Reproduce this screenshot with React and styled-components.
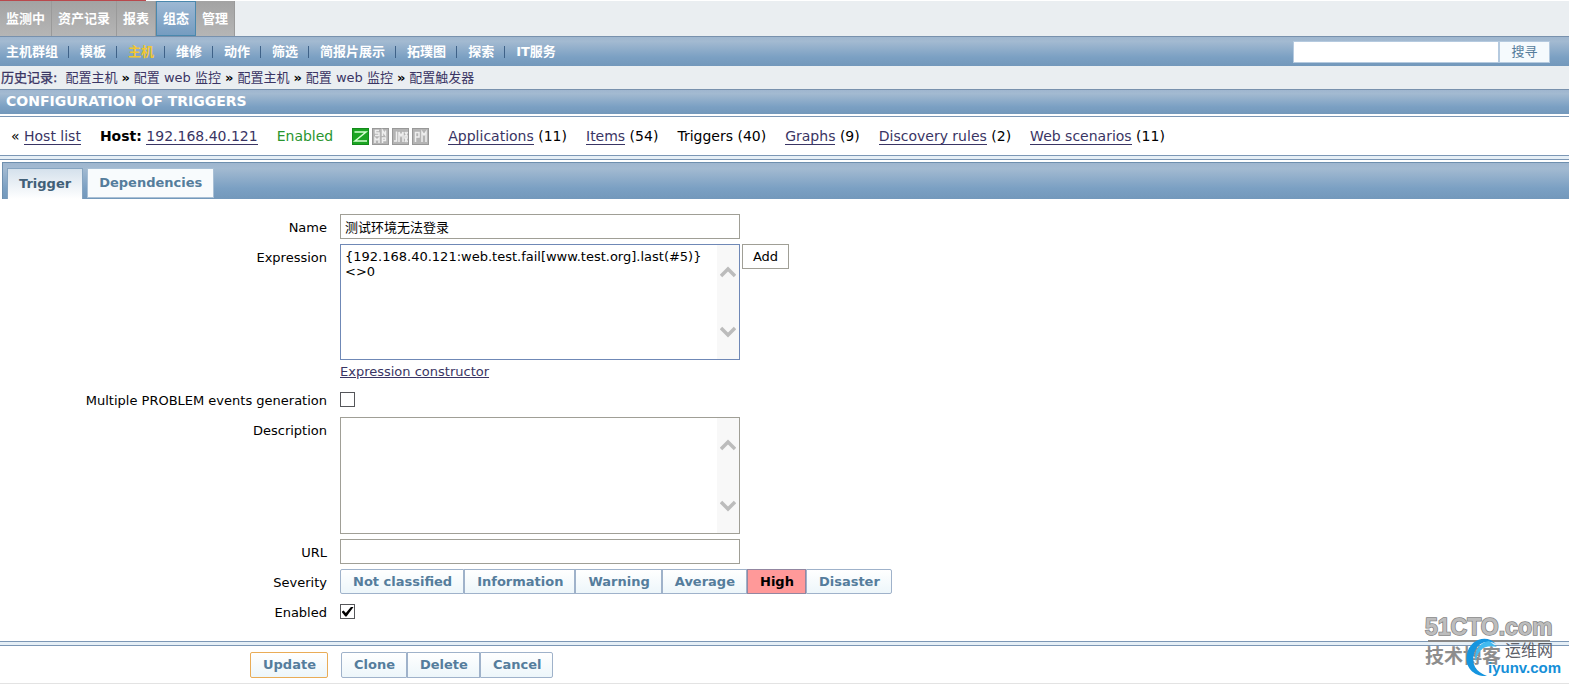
import React from 'react';
import styled, { createGlobalStyle, css } from 'styled-components';

const bar = 'linear-gradient(to bottom, #9fb6cf 0%, #a3bad1 15%, #7ba0c3 70%, #7398bb 100%)';
const link = '#3a3564';
const steel = '#557d9c';

const GlobalStyle = createGlobalStyle`
  * { box-sizing: border-box; }
  body {
    margin: 0;
    background: #fff;
    color: #000;
    font: 13px/16px "DejaVu Sans", "Noto Sans CJK SC", sans-serif;
  }
  button, input, textarea { font: inherit; }
`;

const Page = styled.div`
  position: relative;
  overflow: hidden;
`;

const Progress = styled.div`
  height: 1px;
  width: 146px;
  background: #b9484c;
`;

const MainMenu = styled.nav`
  display: flex;
  height: 35px;
  background: #eaeef1;
`;

const MainItem = styled.a`
  display: flex;
  align-items: center;
  padding: 0 6px;
  border-right: 1px solid #9a9a9a;
  background: linear-gradient(to bottom, #a3a3a3, #b5b5b5);
  color: #fff;
  font-weight: bold;
  text-decoration: none;
  ${(props) => props.$active && css`
    border: 1px solid #4a88ad;
    background: linear-gradient(to bottom, #9db8d3, #759cc0);
  `}
`;

const SubMenu = styled.div`
  display: flex;
  align-items: center;
  justify-content: space-between;
  height: 30px;
  padding: 0 19px 0 6px;
  border-top: 1px solid #7891ad;
  background: ${bar};
`;

const SubNav = styled.nav`
  display: flex;
  align-items: center;
`;

const SubItem = styled.a`
  display: flex;
  align-items: center;
  color: ${(props) => (props.$active ? '#f1c631' : '#fff')};
  font-weight: bold;
  text-decoration: none;
  &:not(:last-child)::after {
    content: '';
    width: 1px;
    height: 12px;
    margin: 0 11px 0 10px;
    background: #3f6288;
  }
`;

const Search = styled.form`
  display: flex;
  height: 22px;
  margin: 0;
`;

const SearchInput = styled.input`
  width: 206px;
  border: 1px solid #b5cadf;
  background: #fff;
`;

const SearchButton = styled.button`
  width: 51px;
  padding: 0;
  border: 1px solid #b5cadf;
  background: #f5fafd;
  color: ${steel};
`;

const History = styled.nav`
  display: flex;
  align-items: center;
  gap: 4px;
  height: 23px;
  padding-left: 1px;
  background: #eaeef1;
  color: #000;
  a {
    color: ${link};
    text-decoration: none;
  }
`;

const HistoryLabel = styled.span`
  margin-right: 4px;
  color: ${link};
  -webkit-text-stroke: 0.3px;
`;

const Title = styled.h1`
  height: 25px;
  margin: 0;
  padding-left: 6px;
  border-top: 1px solid #7891ad;
  background: ${bar};
  color: #fff;
  font-size: 14px;
  line-height: 23px;
`;

const Rule = styled.div`
  height: 5px;
  border: solid #7c97b5;
  border-width: 1px 0;
  background: #e6eff6;
`;

const HostBar = styled.div`
  display: flex;
  align-items: center;
  gap: 19px;
  height: 39px;
  margin-top: 2px;
  padding-left: 11px;
  border-top: 1px solid #7c97b5;
  font-size: 14px;
  white-space: nowrap;
  a {
    color: ${link};
    text-decoration: none;
    border-bottom: 1px solid ${link};
  }
`;

const Status = styled.span`
  color: #29952f;
`;

const Agents = styled.span`
  display: flex;
  gap: 3px;
`;

const Tabs = styled.div`
  display: flex;
  align-items: flex-end;
  gap: 4px;
  height: 37px;
  margin: 2px 0 0 2px;
  padding-left: 4px;
  border: solid #6e8fae;
  border-width: 1px 0 0 1px;
  background: ${bar};
`;

const Tab = styled.button`
  height: 30px;
  margin-bottom: 1px;
  padding: 0 11px;
  border: 1px solid #a9c0d6;
  background: #f8fbfd;
  color: ${steel};
  font-weight: bold;
  ${(props) => props.$active && css`
    height: 31px;
    margin-bottom: 0;
    border-bottom: 0;
    border-color: #86a4c0;
    background: linear-gradient(to bottom, #d5e1ec, #fff);
    color: #416078;
  `}
`;

const Form = styled.form`
  display: grid;
  gap: 5px;
  margin: 0;
  padding: 15px 0 17px;
`;

const Row = styled.div`
  display: grid;
  grid-template-columns: 327px 1fr;
  column-gap: 13px;
  min-height: 25px;
`;

const Label = styled.label`
  padding-top: 6px;
  text-align: right;
`;

const Field = styled.div`
  display: flex;
  align-items: flex-start;
  gap: 2px;
`;

const Column = styled.div`
  display: flex;
  flex-direction: column;
  align-items: flex-start;
  gap: 4px;
  padding-bottom: 2px;
`;

const Input = styled.input`
  width: 400px;
  height: 25px;
  padding: 0 4px;
  border: 1px solid #a09f96;
  background: #fff;
`;

const AreaBox = styled.div`
  display: flex;
  width: 400px;
  height: ${(props) => (props.$focused ? 116 : 117)}px;
  border: 1px solid ${(props) => (props.$focused ? '#6f88b6' : '#a09f96')};
`;

const Area = styled.textarea`
  flex: 1;
  min-width: 0;
  padding: 4px;
  border: 0;
  outline: 0;
  resize: none;
  overflow: hidden;
  line-height: 15px;
`;

const Scroll = styled.div`
  display: flex;
  flex-direction: column;
  align-items: center;
  justify-content: space-between;
  width: 22px;
  padding: 21px 0;
  background: #f8f8f8;
`;

const AddButton = styled.button`
  width: 47px;
  height: 25px;
  padding: 0;
  border: 1px solid #a09f96;
  background: #fff;
`;

const ConstructorLink = styled.a`
  color: ${link};
`;

const Check = styled.input`
  appearance: none;
  width: 15px;
  height: 15px;
  margin: 5px 0 0;
  border: 1px solid #55565a;
  background: #fff;
  display: grid;
  place-items: center;
  &:checked::before {
    content: '';
    width: 12px;
    height: 10px;
    background: #000;
    clip-path: polygon(0 52%, 18% 40%, 36% 66%, 82% 0, 100% 6%, 42% 100%, 32% 100%);
  }
`;

const buttonLook = css`
  padding: 0 11px 0 12px;
  border: 1px solid #9fb2ca;
  background: linear-gradient(to bottom, #fff, #edf6fa);
  color: ${steel};
  font-weight: bold;
`;

const Group = styled.div`
  display: flex;
  > :first-child { border-radius: 2px 0 0 2px; }
  > :last-child { border-radius: 0 2px 2px 0; }
`;

const Severity = styled.label`
  ${buttonLook}
  height: 25px;
  line-height: 23px;
  &:has(input:checked) {
    background: #ff9999;
    border-color: #9386a0;
    color: #000;
  }
  input {
    appearance: none;
    width: 0;
    margin: 0;
    display: block;
  }
`;

const Footer = styled.div`
  display: flex;
  gap: 13px;
  height: 38px;
  padding: 6px 0 0 250px;
  border-bottom: 1px solid #e3e3e3;
`;

const Button = styled.button`
  ${buttonLook}
  height: 26px;
  ${(props) => props.$primary && css`
    border-color: #e9ac57;
    border-radius: 2px;
  `}
`;

const Watermark = styled.svg`
  position: absolute;
  right: 0;
  bottom: 0;
  pointer-events: none;
`;

const mainItems = ['监测中', '资产记录', '报表', '组态', '管理'];
const subItems = ['主机群组', '模板', '主机', '维修', '动作', '筛选', '简报片展示', '拓璞图', '探索', 'IT服务'];
const history = ['配置主机', '配置 web 监控', '配置主机', '配置 web 监控', '配置触发器'];
const severities = ['Not classified', 'Information', 'Warning', 'Average', 'High', 'Disaster'];
const hostLinks = [
  ['Applications', 11],
  ['Items', 54],
  ['Triggers', 40],
  ['Graphs', 9],
  ['Discovery rules', 2],
  ['Web scenarios', 11],
];

// strokes of the small agent badges on a 17x17 grid
const agents = [
  { on: true, d: 'M2.500 4H14L3 13H15' },
  { d: 'M7 2.500H3.500V5H7V7.500H3M10.500 8V2.500L13.500 7V2.500M3 15V10L5 12L7 10V15M10.500 15V10H13.500V12.500H10.500' },
  { d: 'M2 13H4.500V3.500M7 14V4L9 8L11 4V14M13 4L15 8V10L13 14M15.500 4L13 8V10L15.500 14' },
  { d: 'M3.500 14V4.500H7V9H4M10 14V4L12 7L14 4V14' },
];

function ScrollArrows() {
  return (
    <Scroll aria-hidden="true">
      <svg width="16" height="12" fill="none" stroke="#bcbcbc" strokeWidth="3.500">
        <path d="M1 10l7-7 7 7" />
      </svg>
      <svg width="16" height="12" fill="none" stroke="#bcbcbc" strokeWidth="3.500">
        <path d="M1 2l7 7 7-7" />
      </svg>
    </Scroll>
  );
}

export default function App() {
  return (
    <Page>
      <GlobalStyle />
      <Progress />
      <MainMenu>
        {mainItems.map((item) => (
          <MainItem key={item} href="#" $active={item === '组态'}>{item}</MainItem>
        ))}
      </MainMenu>
      <SubMenu>
        <SubNav>
          {subItems.map((item) => (
            <SubItem key={item} href="#" $active={item === '主机'}>{item}</SubItem>
          ))}
        </SubNav>
        <Search>
          <SearchInput type="text" aria-label="搜寻" />
          <SearchButton type="button">搜寻</SearchButton>
        </Search>
      </SubMenu>
      <History>
        <HistoryLabel>历史记录:</HistoryLabel>
        {history.map((item, i) => (
          <React.Fragment key={i}>
            {i > 0 && <b>»</b>}
            <a href="#">{item}</a>
          </React.Fragment>
        ))}
      </History>
      <Title>CONFIGURATION OF TRIGGERS</Title>

      <HostBar>
        <span>« <a href="#">Host list</a></span>
        <span><b>Host:</b> <a href="#">192.168.40.121</a></span>
        <Status>Enabled</Status>
        <Agents>
          {agents.map(({ on, d }, i) => (
            <svg key={i} width="17" height="17" fill="none">
              <rect x="0.500" y="0.500" width="16" height="16" fill={on ? '#1ba522' : '#b4b4b4'} stroke={on ? '#138a1a' : '#989898'} />
              <path d={d} stroke={on ? '#d5ffd0' : '#eee'} strokeWidth="1.500" />
            </svg>
          ))}
        </Agents>
        {hostLinks.map(([name, count]) => (
          <span key={name}>
            {name === 'Triggers' ? name : <a href="#">{name}</a>} ({count})
          </span>
        ))}
      </HostBar>
      <Rule />

      <Tabs role="tablist">
        <Tab type="button" role="tab" aria-selected="true" $active>Trigger</Tab>
        <Tab type="button" role="tab" aria-selected="false">Dependencies</Tab>
      </Tabs>

      <Form>
        <Row>
          <Label htmlFor="name">Name</Label>
          <Field><Input id="name" type="text" defaultValue="测试环境无法登录" /></Field>
        </Row>
        <Row>
          <Label htmlFor="expression">Expression</Label>
          <Column>
            <Field>
              <AreaBox $focused>
                <Area id="expression" spellCheck="false" defaultValue={'{192.168.40.121:web.test.fail[www.test.org].last(#5)}\n<>0'} />
                <ScrollArrows />
              </AreaBox>
              <AddButton type="button">Add</AddButton>
            </Field>
            <ConstructorLink href="#">Expression constructor</ConstructorLink>
          </Column>
        </Row>
        <Row>
          <Label htmlFor="multiple">Multiple PROBLEM events generation</Label>
          <Field><Check id="multiple" type="checkbox" /></Field>
        </Row>
        <Row>
          <Label htmlFor="description">Description</Label>
          <AreaBox>
            <Area id="description" />
            <ScrollArrows />
          </AreaBox>
        </Row>
        <Row>
          <Label htmlFor="url">URL</Label>
          <Field><Input id="url" type="text" /></Field>
        </Row>
        <Row>
          <Label as="span" id="severity">Severity</Label>
          <Group role="radiogroup" aria-labelledby="severity">
            {severities.map((item) => (
              <Severity key={item}>
                <input type="radio" name="severity" defaultChecked={item === 'High'} />
                {item}
              </Severity>
            ))}
          </Group>
        </Row>
        <Row>
          <Label htmlFor="enabled">Enabled</Label>
          <Field><Check id="enabled" type="checkbox" defaultChecked /></Field>
        </Row>
      </Form>

      <Rule />
      <Footer>
        <Button type="button" $primary>Update</Button>
        <Group>
          <Button type="button">Clone</Button>
          <Button type="button">Delete</Button>
          <Button type="button">Cancel</Button>
        </Group>
      </Footer>

      <Watermark width="160" height="84" viewBox="0 0 160 84">
        <g fontFamily="'Liberation Sans', sans-serif" fontWeight="bold" fontSize="23">
          <text x="16" y="35" fill="#bdbdbd" stroke="#858585" strokeWidth="1.500" paintOrder="stroke">51CTO.com</text>
        </g>
        <path d="M19 41h122" stroke="#888" strokeWidth="2" />
        <text x="16" y="63" fill="#8d8d8d" fontFamily="'Noto Sans CJK SC', sans-serif" fontWeight="bold" fontSize="19">技术博客</text>
        <path d="M87 44C78 34 61 39 58 54C55 68 66 77 78 76C67 72 62 64 65 54C68 43 78 39 87 44Z" fill="#1595df" />
        <path d="M80 41C69 43 64 53 67 62C68 50 76 44 88 47Z" fill="#42baf0" />
        <text x="96" y="56" fill="#5c6068" fontFamily="'Noto Sans CJK SC', sans-serif" fontSize="16">运维网</text>
        <text x="79" y="73" fill="#158fd8" fontFamily="'Liberation Sans', sans-serif" fontWeight="bold" fontSize="15">iyunv.com</text>
      </Watermark>
    </Page>
  );
}
